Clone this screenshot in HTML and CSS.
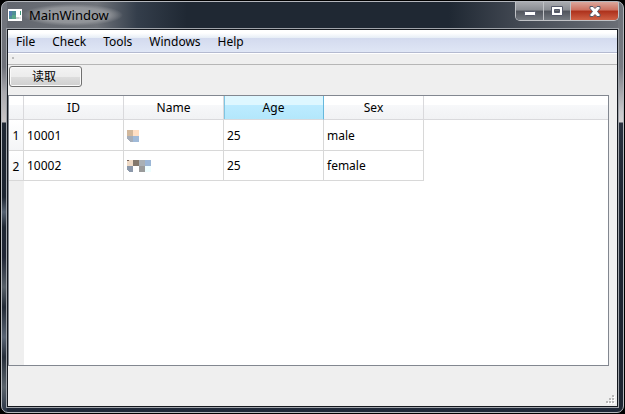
FILE: index.html
```
<!DOCTYPE html>
<html lang="en">
<head>
<meta charset="utf-8">
<title>MainWindow</title>
<link rel="stylesheet" href="styles.css">
</head>
<body>
<div class="window">
  <header class="titlebar">
    <svg class="app-icon" width="14" height="12" viewBox="0 0 14 12" shape-rendering="crispEdges" aria-hidden="true">
      <rect width="14" height="12" fill="#fff"/>
      <rect x="1" y="2" width="7" height="8" fill="#4f8f96"/>
      <rect x="1" y="2" width="3" height="5" fill="#557fae"/>
      <rect x="4" y="6" width="4" height="4" fill="#5ba58a"/>
      <rect x="8" y="8" width="3" height="2" fill="#c9ced0"/>
      <rect x="12" y="2" width="1" height="4" fill="#3f9a7c"/>
      <rect x="11" y="8" width="2" height="2" fill="#e4e6e8"/>
    </svg>
    <h1 class="title">MainWindow</h1>
    <div class="controls">
      <button class="control" type="button" aria-label="Minimize">
        <svg width="12" height="10" viewBox="0 0 12 10"><rect x=".5" y="5.5" width="11" height="4" rx="1" fill="#fff" stroke="#55596a"/></svg>
      </button>
      <button class="control" type="button" aria-label="Maximize">
        <svg width="12" height="10" viewBox="0 0 12 10"><path fill="#fff" fill-rule="evenodd" stroke="#55596a" d="M.5.5h11v9H.5zM3.500 3.500v3h5v-3z"/></svg>
      </button>
      <button class="control close" type="button" aria-label="Close">
        <svg width="12" height="11" viewBox="0 0 12 11"><path fill="#fff" stroke="#55596a" d="M1 .5h3l2 2 2-2h3v2l-2.500 3 2.500 3v2H8l-2-2-2 2H1v-2l2.500-3L1 2.500z"/></svg>
      </button>
    </div>
  </header>
  <main class="client">
    <nav class="menubar">
      <button type="button">File</button>
      <button type="button">Check</button>
      <button type="button">Tools</button>
      <button type="button">Windows</button>
      <button type="button">Help</button>
    </nav>
    <div class="toolbar"><span class="grip"></span></div>
    <div class="actions"><button class="push" type="button">读取</button></div>
    <div class="table-view">
      <table>
        <colgroup><col class="index"><col class="field"><col class="field"><col class="field"><col class="field"><col></colgroup>
        <thead>
          <tr><td></td><th scope="col">ID</th><th scope="col">Name</th><th scope="col" class="active">Age</th><th scope="col">Sex</th><td class="filler"></td></tr>
        </thead>
        <tbody>
          <tr>
            <th scope="row">1</th><td>10001</td>
            <td>
              <svg class="mosaic" width="24" height="12" viewBox="0 0 24 12" shape-rendering="crispEdges" aria-hidden="true">
                <rect width="6" height="6" fill="#d2b89c"/><rect x="6" width="6" height="6" fill="#ffdfc4"/>
                <path d="M0 6h6v6H3L0 9z" fill="#a5adb9"/><rect x="6" y="6" width="6" height="6" fill="#a0bad8"/>
              </svg>
            </td>
            <td>25</td><td>male</td>
          </tr>
          <tr>
            <th scope="row">2</th><td>10002</td>
            <td>
              <svg class="mosaic" width="24" height="12" viewBox="0 0 24 12" shape-rendering="crispEdges" aria-hidden="true">
                <rect width="6" height="6" fill="#efdac6"/><rect width="2" height="1" fill="#75645c"/><rect x="6" width="6" height="6" fill="#83776c"/>
                <rect x="12" width="6" height="6" fill="#a9b0b5"/><rect x="18" width="6" height="6" fill="#9bb6d6"/>
                <path d="M0 6h6v6H2L0 10z" fill="#8c98aa"/><rect x="12" y="6" width="6" height="6" fill="#9a9b9b"/>
                <rect x="18" y="6" width="6" height="6" fill="#effeff"/>
              </svg>
            </td>
            <td>25</td><td>female</td>
          </tr>
        </tbody>
      </table>
    </div>
    <footer class="statusbar">
      <svg width="9" height="9" viewBox="0 0 9 9" shape-rendering="crispEdges" aria-hidden="true">
        <path fill="#fff" d="M7 1h2v2H7zM4 4h2v2H4zM7 4h2v2H7zM1 7h2v2H1zM4 7h2v2H4zM7 7h2v2H7z"/>
        <path fill="#b8b8b8" d="M6 0h2v2H6zM3 3h2v2H3zM6 3h2v2H6zM0 6h2v2H0zM3 6h2v2H3zM6 6h2v2H6z"/>
      </svg>
    </footer>
  </main>
</div>
</body>
</html>
```
FILE: styles.css
```
* { box-sizing: border-box; }

body {
  margin: 0;
  background: #000;
  color: #000;
  font: 12px/16px "Noto Sans", "Noto Sans CJK SC", sans-serif;
}

button { font: inherit; color: inherit; }

.window {
  display: flex;
  flex-direction: column;
  height: calc(100vh - 2px);
  margin: 1px;
  padding: 0 4px 4px;
  border: 1px solid #b4b7bd;
  border-radius: 7px;
  background:
    linear-gradient(#6c7077, #777b82 65px, #c9c9cc 110px, #d2d0d1 120px, #2a323f 121px, #1f2733 200px, #1f2733) right / 5px 100% no-repeat,
    linear-gradient(#70747c, #6f727a 65px, #a9a9ae 90px, #c9c5c6 120px, #202834 121px, #1c2430 195px, #566272 210px, #1f2733 225px, #202636 255px, #58616a 285px, #222a36 305px, #5a6575 335px, #252d39 355px, #5b646c 385px, #2a3546 100%) left / 5px 100% no-repeat,
    linear-gradient(to right, #62666e, #6f737a 95px, #343e4b 135px, #1f2833 185px, #1f2833 72%, #454b55 84%, #6c7077) top / 100% 27px no-repeat,
    #1f2838;
}

.titlebar {
  display: flex;
  align-items: flex-start;
  height: 26px;
  padding-left: 2px;
}

.app-icon { margin-top: 7px; }

.title {
  margin: 2px 0 0;
  padding: 1px 14px 1px 7px;
  border-radius: 11px;
  background: radial-gradient(closest-side, #9b9ea2, #909398 70%, transparent);
  font-size: 13px;
  font-weight: 400;
  line-height: 20px;
}

.controls {
  display: flex;
  margin-left: auto;
  height: 19px;
  border: 1px solid #c0c2c6;
  border-top: 0;
  border-radius: 0 0 5px 5px;
  overflow: hidden;
}

.control {
  display: grid;
  place-items: center;
  width: 28px;
  padding: 0;
  border: 0;
  border-right: 1px solid #c0c2c6;
  background: linear-gradient(#a9abb0, #898c92 45%, #50545c 50%, #747980);
}

.control + .control { width: 27px; }

.controls .close {
  width: 47px;
  border-right: 0;
  background: linear-gradient(#dba79c, #cc705f 45%, #ad301b 50%, #cf6145);
}

.client {
  display: flex;
  flex: 1;
  flex-direction: column;
  min-height: 0;
  border: 1px solid #14181e;
  outline: 1px solid #a0a4aa;
  margin: 1px;
  background: #efefef;
}

.menubar {
  display: flex;
  gap: 1px;
  height: 24px;
  flex: none;
  border-bottom: 1px solid #fff;
  background:
    linear-gradient(#b4bad0, #b4bad0) bottom / 100% 1px no-repeat,
    linear-gradient(#fff 3px, #e6edf6 8px, #d3daee 8px, #e0e7f6);
}

.menubar button {
  padding: 0 8px;
  border: 0;
  background: none;
}

.toolbar {
  flex: none;
  height: 11px;
  padding: 3px 4px;
  border-bottom: 1px solid #b6b6b6;
}

.grip {
  display: block;
  width: 2px;
  height: 2px;
  background: #bcbcbc;
}

.actions {
  flex: none;
  height: 30px;
  padding: 1px;
}

.push {
  width: 73px;
  height: 21px;
  padding: 1px 3px 0 0;
  border: 1px solid #707070;
  border-radius: 3px;
  background: linear-gradient(#f3f3f3, #ececec 50%, #dedede 50%, #cfcfcf);
  box-shadow: inset 0 0 0 1px #fafafa;
}

.table-view {
  flex: 1;
  min-height: 0;
  margin-right: 8px;
  border: 1px solid #828790;
  background: linear-gradient(#efefef, #efefef) left / 15px 100% no-repeat, #fff;
}

table {
  width: 100%;
  border-spacing: 0;
  table-layout: fixed;
}

.index { width: 15px; }
.field { width: 100px; }

th, td {
  height: 30px;
  padding: 0 3px;
  border: solid #d8d8d8;
  border-width: 0 1px 1px 0;
  font-weight: 400;
  text-align: left;
}

thead th, thead td {
  height: 24px;
  border-color: #d9d9dc;
  background: linear-gradient(#fff 9px, #f7f8fa 9px, #f1f2f4);
  text-align: center;
}

thead .filler { border-right: 0; }

thead .active {
  border-right-color: #66b8dc;
  background: linear-gradient(#def7ff 9px, #bcebff 9px, #b3e7fb);
  box-shadow: inset 1px 0 #7fc5e2;
}

tbody th {
  padding: 2px 0 0;
  background: linear-gradient(#fff, #f4f5f7);
  text-align: center;
}

tbody td {
  padding-top: 1px;
  background: #fff;
}

tbody tr:first-child > * { height: 31px; }

.mosaic { display: block; }

.statusbar {
  display: flex;
  flex: none;
  align-items: flex-end;
  justify-content: flex-end;
  height: 40px;
  padding: 2px;
}
```
